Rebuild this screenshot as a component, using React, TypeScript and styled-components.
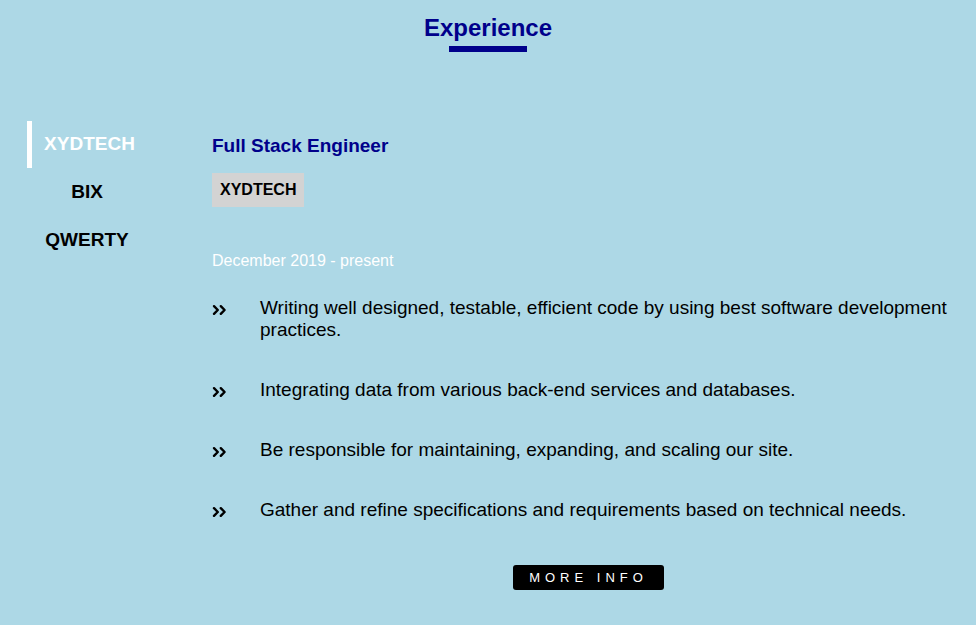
import React, { useState } from "react";
import styled, { createGlobalStyle } from "styled-components";

const GlobalStyle = createGlobalStyle`
  * { box-sizing: border-box; }
  body {
    margin: 0;
    background: lightblue;
    color: #000;
    font-family: "Liberation Sans", Arial, sans-serif;
  }
`;

const Section = styled.section`
  padding: 14px 0 35px;
`;

const Header = styled.header`
  display: flex;
  flex-direction: column;
  align-items: center;
  margin-bottom: 69px;
`;

const Title = styled.h2`
  margin: 0;
  font-size: 24px;
  line-height: 28px;
  color: darkblue;
`;

const Underline = styled.div`
  width: 78px;
  height: 6px;
  margin-top: 4px;
  background: darkblue;
`;

const Layout = styled.div`
  display: grid;
  grid-template-columns: 120px minmax(0, 1fr);
  column-gap: 65px;
  padding: 0 11px 0 27px;
`;

const Tabs = styled.nav`
  display: flex;
  flex-direction: column;
  gap: 1px;
`;

const Tab = styled.button<{ $active: boolean }>`
  height: 47px;
  padding: 0 0 2px;
  border: 0;
  border-left: ${(p) => (p.$active ? "5px solid #fff" : "0")};
  background: none;
  color: ${(p) => (p.$active ? "#fff" : "#000")};
  font: bold 19px "Liberation Sans", Arial, sans-serif;
  cursor: pointer;
`;

const Panel = styled.article`
  display: flex;
  flex-direction: column;
  align-items: flex-start;
  padding-top: 14px;
`;

const Role = styled.h3`
  margin: 0;
  font-size: 19px;
  line-height: 22px;
  color: darkblue;
`;

const Company = styled.h4`
  margin: 16px 0 0;
  padding: 8px;
  background: lightgray;
  font-size: 16px;
  line-height: 18px;
`;

const Dates = styled.p`
  margin: 45px 0 0;
  font-size: 16px;
  line-height: 18px;
  color: #fff;
`;

const Duties = styled.ul`
  display: flex;
  flex-direction: column;
  gap: 38px;
  margin: 27px 0 0;
  padding: 0;
  list-style: none;
`;

const Duty = styled.li`
  display: grid;
  grid-template-columns: 16px minmax(0, 1fr);
  column-gap: 32px;
  font-size: 19px;
  line-height: 22px;
`;

const Chevrons = styled.svg`
  width: 16px;
  height: 16px;
  margin-top: 5px;
  fill: none;
  stroke: currentColor;
  stroke-width: 2.4;
  stroke-linecap: round;
  stroke-linejoin: round;
`;

const MoreInfo = styled.button`
  align-self: center;
  margin-top: 44px;
  padding: 0 16px;
  height: 25px;
  border: 0;
  border-radius: 3px;
  background: #000;
  color: #fff;
  font: 13px "Liberation Sans", Arial, sans-serif;
  letter-spacing: 5px;
  cursor: pointer;
`;

const companies = ["XYDTECH", "BIX", "QWERTY"];

const duties = [
  "Writing well designed, testable, efficient code by using best software development practices.",
  "Integrating data from various back-end services and databases.",
  "Be responsible for maintaining, expanding, and scaling our site.",
  "Gather and refine specifications and requirements based on technical needs.",
];

export default function App() {
  const [active, setActive] = useState(0);
  return (
    <Section>
      <GlobalStyle />
      <Header>
        <Title>Experience</Title>
        <Underline />
      </Header>
      <Layout>
        <Tabs>
          {companies.map((name, i) => (
            <Tab key={name} type="button" $active={i === active} onClick={() => setActive(i)}>
              {name}
            </Tab>
          ))}
        </Tabs>
        <Panel>
          <Role>Full Stack Engineer</Role>
          <Company>{companies[active]}</Company>
          <Dates>December 2019 - present</Dates>
          <Duties>
            {duties.map((duty) => (
              <Duty key={duty}>
                <Chevrons viewBox="0 0 16 16" aria-hidden>
                  <path d="M2 4.2 5.8 8 2 11.8M8.8 4.2 12.6 8 8.8 11.8" />
                </Chevrons>
                <span>{duty}</span>
              </Duty>
            ))}
          </Duties>
          <MoreInfo type="button">MORE INFO</MoreInfo>
        </Panel>
      </Layout>
    </Section>
  );
}
